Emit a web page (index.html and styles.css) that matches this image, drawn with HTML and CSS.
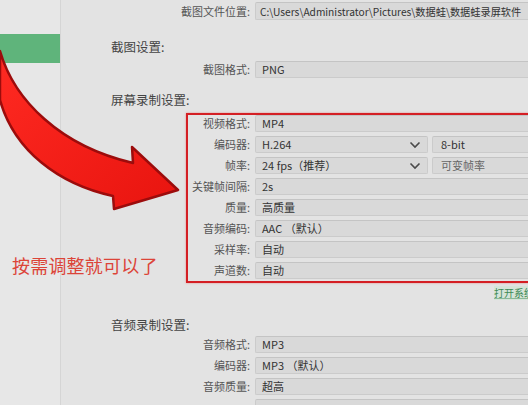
FILE: index.html
```html
<!DOCTYPE html>
<html lang="zh-CN">
<head>
<meta charset="utf-8">
<link rel="stylesheet" href="styles.css">
</head>
<body>
<div class="app">
  <aside class="sidebar">
    <div class="side-active"></div>
  </aside>
  <main class="main">
    <div class="row row-first">
      <label class="lbl">截图文件位置:</label>
      <div class="field path">C:\Users\Administrator\Pictures\数据蛙\数据蛙录屏软件</div>
    </div>
    <h2 class="heading h-shot">截图设置:</h2>
    <div class="row">
      <label class="lbl">截图格式:</label>
      <div class="field">PNG</div>
    </div>
    <h2 class="heading h-screen">屏幕录制设置:</h2>
    <div class="group g-screen">
      <div class="row"><label class="lbl">视频格式:</label><div class="field">MP4</div></div>
      <div class="row">
        <label class="lbl">编码器:</label>
        <div class="split">
          <div class="field select">H.264<svg class="chev" viewBox="0 0 12 8" width="12" height="8"><polyline points="1.5,1.5 6,6 10.5,1.5"/></svg></div>
          <div class="field">8-bit</div>
        </div>
      </div>
      <div class="row">
        <label class="lbl">帧率:</label>
        <div class="split">
          <div class="field select">24 fps（推荐）<svg class="chev" viewBox="0 0 12 8" width="12" height="8"><polyline points="1.5,1.5 6,6 10.5,1.5"/></svg></div>
          <div class="field muted">可变帧率</div>
        </div>
      </div>
      <div class="row"><label class="lbl">关键帧间隔:</label><div class="field">2s</div></div>
      <div class="row"><label class="lbl">质量:</label><div class="field">高质量</div></div>
      <div class="row"><label class="lbl">音频编码:</label><div class="field">AAC （默认）</div></div>
      <div class="row"><label class="lbl">采样率:</label><div class="field">自动</div></div>
      <div class="row"><label class="lbl">声道数:</label><div class="field">自动</div></div>
    </div>
    <div class="link-row"><a class="link">打开系统文件夹</a></div>
    <h2 class="heading h-audio">音频录制设置:</h2>
    <div class="group g-audio">
      <div class="row"><label class="lbl">音频格式:</label><div class="field">MP3</div></div>
      <div class="row"><label class="lbl">编码器:</label><div class="field">MP3 （默认）</div></div>
      <div class="row"><label class="lbl">音频质量:</label><div class="field">超高</div></div>
      <div class="row"><label class="lbl"></label><div class="field"></div></div>
    </div>
  </main>
</div>
<div class="highlight-box"></div>
<svg class="arrow" viewBox="0 0 200 220" width="200" height="220">
  <defs>
    <linearGradient id="ag" x1="0" y1="0" x2="1" y2="1">
      <stop offset="0" stop-color="#ff2a22"/>
      <stop offset="1" stop-color="#e8140f"/>
    </linearGradient>
  </defs>
  <path d="M0 51 C 14 100, 60 146, 133 163 L 132 147 L 178 190 L 114 209 L 113 196 C 58 184, 14 150, 0 100 Z" fill="url(#ag)" stroke="#9c0c0c" stroke-width="2.5" stroke-linejoin="round"/>
</svg>
<div class="note">按需调整就可以了</div>
</body>
</html>
```

FILE: styles.css
```css
* { box-sizing: border-box; }
html, body {
  margin: 0;
  padding: 0;
  width: 528px;
  height: 405px;
  overflow: hidden;
  background: #e3e3e3;
  font-family: "Noto Sans CJK SC", "Noto Sans", sans-serif;
}
.app {
  display: flex;
  height: 405px;
}
.sidebar {
  width: 61px;
  flex: none;
  background: #e7e7e7;
  border-right: 1px solid #d5d5d5;
  padding-top: 34px;
}
.side-active {
  height: 29px;
  background: #5fb47b;
}
.main {
  flex: 1;
  padding-top: 2px;
  min-width: 0;
}
.row {
  display: grid;
  grid-template-columns: 194px 1fr;
  height: 17px;
  align-items: center;
}
.row-first { height: 18px; }
.lbl {
  text-align: right;
  padding-right: 5px;
  font-size: 11px;
  color: #555;
  line-height: 17px;
  white-space: nowrap;
}
.field {
  height: 100%;
  background: #d9d9d9;
  border: 1px solid #cbcbcb;
  border-top-color: #c4c4c4;
  border-right: none;
  border-radius: 2px 0 0 2px;
  font-size: 11px;
  color: #333;
  line-height: 15px;
  padding-left: 6px;
  white-space: nowrap;
  overflow: hidden;
  display: flex;
  align-items: center;
}
.path { font-size: 10.2px; padding-left: 4px; }
.split {
  display: flex;
  gap: 4px;
  height: 100%;
}
.split .select {
  width: 173px;
  flex: none;
  border-right: 1px solid #cbcbcb;
  border-radius: 2px;
  justify-content: space-between;
  padding-right: 6px;
}
.split .field:last-child { flex: 1; padding-left: 8px; }
.muted { color: #666; }
.chev {
  fill: none;
  stroke: #4a4a4a;
  stroke-width: 1.6;
  flex: none;
}
.heading {
  margin: 0;
  font-size: 12.5px;
  font-weight: normal;
  color: #444;
  line-height: 20px;
  padding-left: 50px;
}
.h-shot { margin-top: 17px; margin-bottom: 4px; }
.h-screen { margin-top: 12px; }
.g-screen { margin-top: 5px; display: flex; flex-direction: column; gap: 4px; }
.g-audio { margin-top: 1px; display: flex; flex-direction: column; gap: 4px; }
.link-row {
  margin-top: 7px;
  height: 14px;
  padding-left: 433px;
  font-size: 10px;
  line-height: 14px;
  white-space: nowrap;
  overflow: hidden;
}
.link {
  color: #3d8a55;
  background: #d5e4d8;
  text-decoration: underline;
  text-decoration-color: #8bb897;
}
.h-audio { margin-top: 15px; }
.highlight-box {
  position: absolute;
  left: 186px;
  top: 113px;
  width: 360px;
  height: 170px;
  border: 2px solid #d41f24;
  box-shadow: 0 0 2px rgba(230, 60, 60, 0.5);
}
.arrow {
  position: absolute;
  left: 0;
  top: 0;
}
.note {
  position: absolute;
  left: 12px;
  top: 253px;
  font-size: 18px;
  line-height: 24px;
  color: #dc4438;
  letter-spacing: 0.2px;
}
```
